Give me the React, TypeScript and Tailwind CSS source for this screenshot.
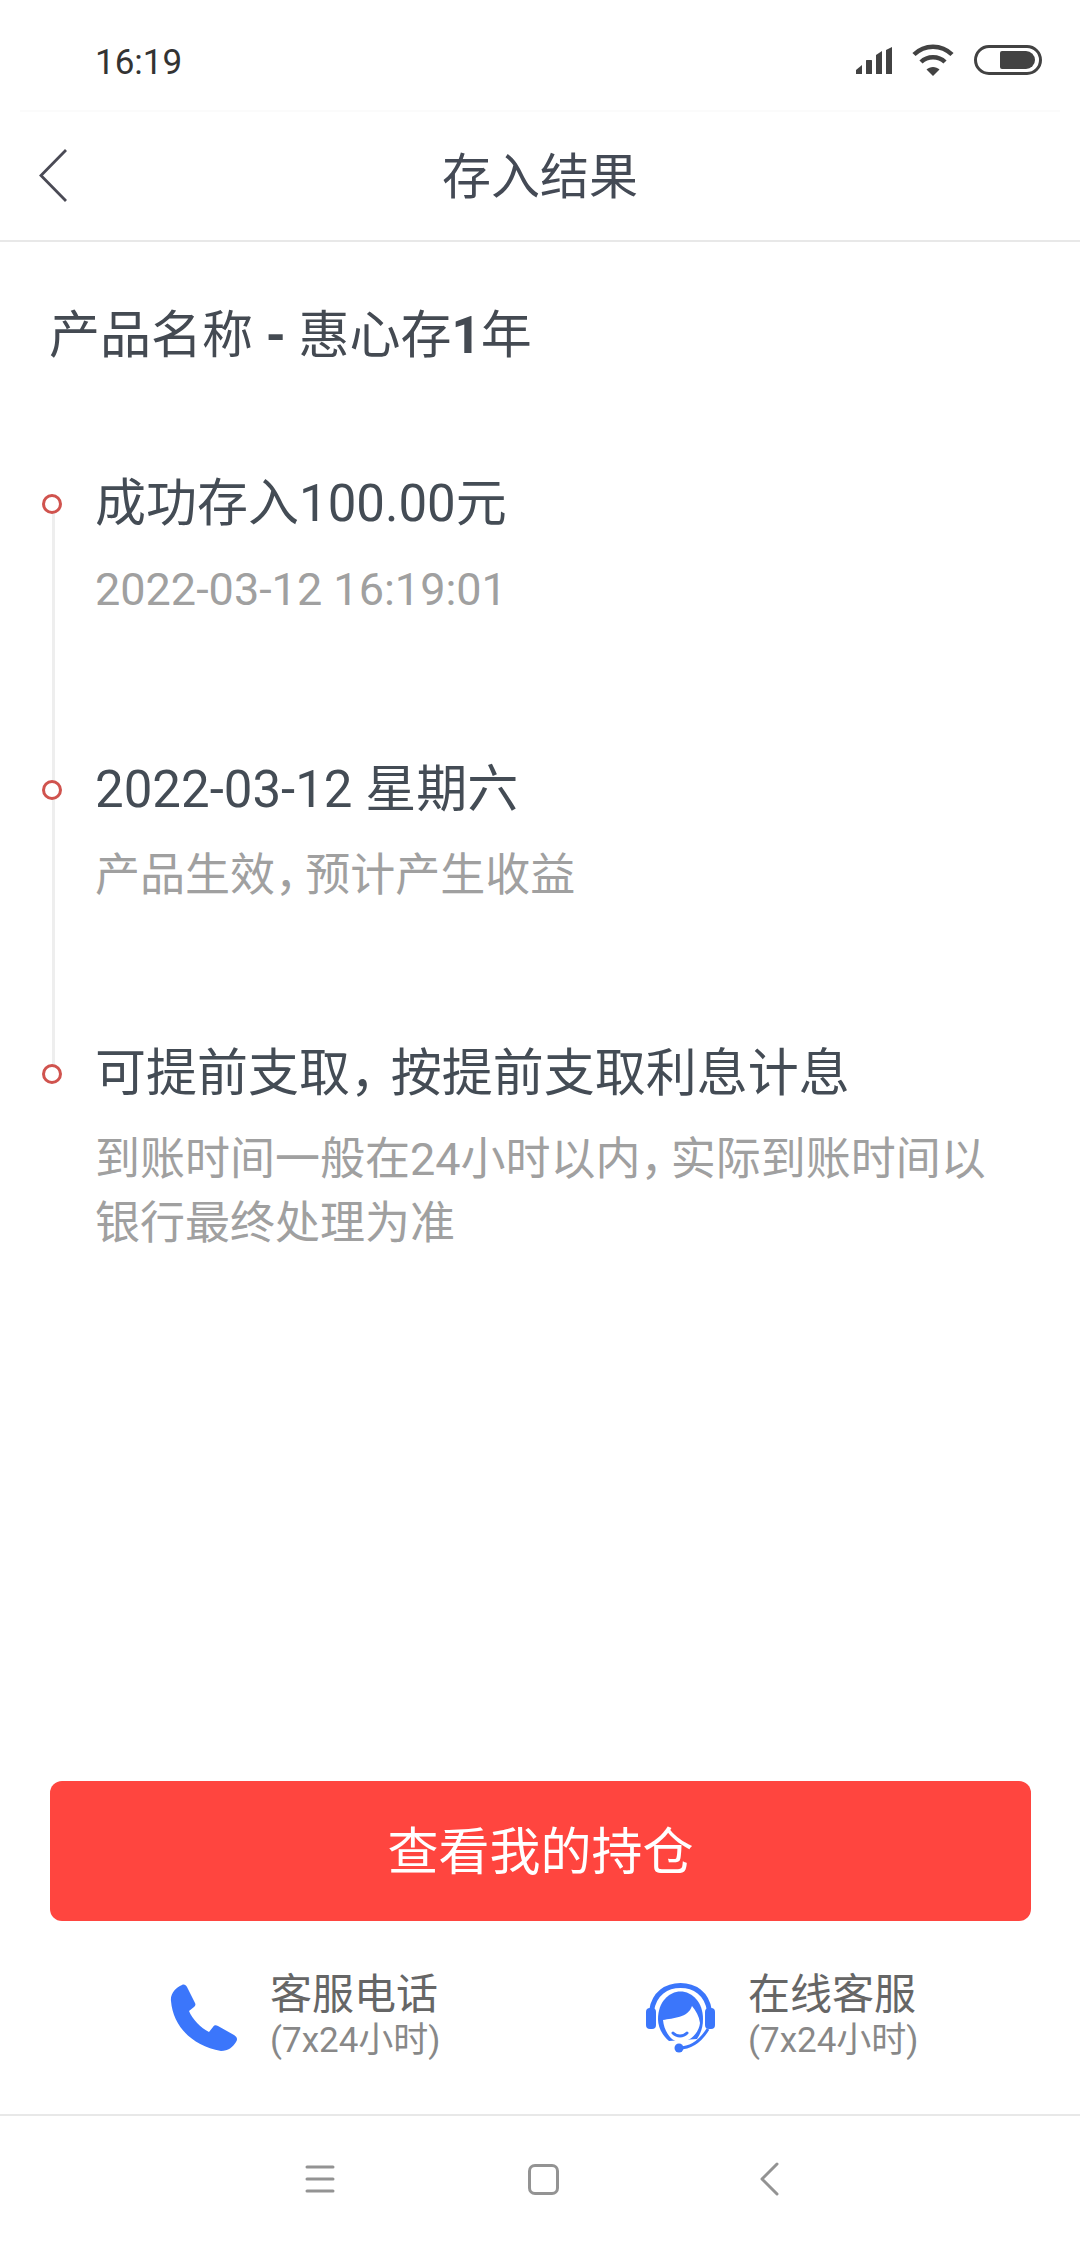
import React from "react";

const Comma = ({ tight }: { tight?: boolean }) => (
  <span className={tight ? "tracking-[-0.33em]" : "tracking-[-0.2em]"}>，</span>
);

const steps = [
  { title: <>成功存入100.00元</>, desc: [<>2022-03-12 16:19:01</>], offset: "" },
  { title: <>2022-03-12 星期六</>, desc: [<>产品生效<Comma tight />预计产生收益</>], offset: "" },
  {
    title: <>可提前支取<Comma />按提前支取利息计息</>,
    desc: [<>到账时间一般在24小时以内<Comma tight />实际到账时间以</>, <>银行最终处理为准</>],
    offset: "-mt-[2px]",
  },
];

const StatusIcons = () => (
  <div className="flex items-center gap-[20px]">
    <svg width="36" height="27" viewBox="0 0 36 27" fill="#424242">
      <path d="M0 27V23L6 18V27Z" />
      <rect x="10" y="13" width="6" height="14" rx="0.5" />
      <path d="M20 27V8L26 4V27Z" />
      <path d="M30 27V3L36 0V27Z" />
    </svg>
    <svg width="42" height="32" viewBox="0 0 42 32" fill="none" stroke="#424242" strokeWidth="4.5">
      <path d="M2 10.5C12.5 0 29.5 0 40 10.5" />
      <path d="M9 18C15.5 11.5 26.5 11.5 33 18" />
      <path d="M21 32L14.5 25.5C18 22 24 22 27.5 25.5Z" fill="#424242" stroke="none" />
    </svg>
    <div className="flex h-[30px] w-[68px] items-center justify-end rounded-full border-[3px] border-[#424242] pr-[4px]">
      <div className="h-[18px] w-[35px] rounded-l-[2px] rounded-r-[9px] bg-[#424242]" />
    </div>
  </div>
);

const PhoneIcon = () => (
  <svg width="68" height="68" viewBox="0 0 68 68" fill="#3b76fb">
    <path d="M12 1C14 0 16 1 17 3L25 19C26 21 25 22 24 23L19 27C22 35 31 44 39 48L43 43C44 41 46 41 48 42L64 51C67 53 68 55 66 58C63 63 58 67 51 67C22 62 3 42 1 17C0 10 6 3 12 1Z" />
  </svg>
);

const AgentIcon = () => (
  <svg width="70" height="70" viewBox="0 0 70 70" fill="#3b76fb">
    {/* headband and ear cups */}
    <path d="M5.5 28C8 10 21 2.5 34.5 2.5C48 2.500 61 10 63.500 28" fill="none" stroke="#3b76fb" strokeWidth="5" />
    <rect x="0" y="25" width="10" height="21" rx="4" />
    <rect x="59" y="25" width="10" height="21" rx="4" />
    {/* hair */}
    <path d="M12 36C12 19 23 8.500 34.500 8.500C46 8.500 57 19 57 36C57 44 55 50 51 56L23 58C16 52 12 44 12 36Z" />
    {/* face */}
    <path d="M17 37C27 35 42 35 46 23C50 28 53 33 54 40C53 50 44 59 34 59C25 59 18 48 17 37Z" fill="#fff" />
    {/* smile */}
    <path d="M27 50C31 54 37 54 41 50" fill="none" stroke="#3b76fb" strokeWidth="3" strokeLinecap="round" />
    {/* microphone */}
    <path d="M33 65C44 65 54 59 62 46" fill="none" stroke="#3b76fb" strokeWidth="3" />
    <circle cx="33" cy="65" r="4.500" />
  </svg>
);

export default function App() {
  return (
    <div className="flex h-[2244px] w-[1080px] flex-col bg-white font-['Roboto','Noto_Sans_CJK_SC',sans-serif]">
      {/* system status bar */}
      <div className="mx-[20px] flex h-[112px] items-center justify-between border-b-2 border-[#fbfbfb] pl-[75px] pr-[18px] pt-[14px]">
        <span className="text-[35px] leading-none text-[#333333]">16:19</span>
        <div className="pb-[4px]">
          <StatusIcons />
        </div>
      </div>

      {/* title bar */}
      <header className="relative flex h-[130px] items-center justify-center border-b-2 border-[#e8e8e8]">
        <svg className="absolute left-[38px] top-[36px]" width="32" height="56" viewBox="0 0 32 56" fill="none" stroke="#4a4a55" strokeWidth="2.800">
          <path d="M28 2L3 27.500L28 53" />
        </svg>
        <h1 className="pt-[3px] text-[49px] font-normal text-[#444a55]">存入结果</h1>
      </header>

      <main className="flex flex-1 flex-col px-[50px] pt-[62px]">
        <h2 className="-ml-px text-[51px] leading-[64px] text-[#444a52]">
          产品名称 <span className="font-bold">-</span> 惠心存<span className="font-bold">1</span>年
        </h2>

        {/* timeline */}
        <ol className="relative mt-[104px] flex flex-col gap-[136px]">
          <div className="absolute left-[2px] top-[40px] h-[562px] w-[3px] bg-[#eeeeee]" />
          {steps.map((step, i) => (
            <li key={i} className={`relative pl-[45px] ${step.offset}`}>
              <span className="absolute left-[-8px] top-[22px] size-[20px] rounded-full border-[3px] border-[#d0534e] bg-white" />
              <p className="text-[51px] leading-[64px] text-[#444c55]">{step.title}</p>
              <div className="mt-[22px] text-[45px] leading-[64px] text-[#a0a0a0]">
                {step.desc.map((line, j) => (
                  <p key={j}>{line}</p>
                ))}
              </div>
            </li>
          ))}
        </ol>

        <button className="mt-auto flex h-[140px] w-[981px] shrink-0 items-center justify-center rounded-[12px] bg-[#ff453f] pt-[5px] text-[51px] text-white">
          查看我的持仓
        </button>

        {/* customer service entries */}
        <div className="-mx-[50px] flex h-[193px] shrink-0 items-center pl-[170px]">
          <div className="flex w-[476px] items-center gap-[32px]">
            <PhoneIcon />
            <div className="-mt-[2px]">
              <p className="text-[42px] leading-[48px] text-[#666666]">客服电话</p>
              <p className="text-[35px] leading-[44px] text-[#888888]">(7x24小时)</p>
            </div>
          </div>
          <div className="flex items-center gap-[32px]">
            <AgentIcon />
            <div className="-mt-[2px]">
              <p className="text-[42px] leading-[48px] text-[#666666]">在线客服</p>
              <p className="text-[35px] leading-[44px] text-[#888888]">(7x24小时)</p>
            </div>
          </div>
        </div>
      </main>

      {/* system navigation bar */}
      <nav className="flex h-[130px] shrink-0 items-center border-t-2 border-[#e8e8e8] pb-[2px] pl-[305px]">
        <svg width="30" height="28" viewBox="0 0 30 28" stroke="#939393" strokeWidth="3" strokeLinecap="round">
          <path d="M2 2H28M2 14H28M2 26H28" />
        </svg>
        <div className="ml-[193px] size-[31px] rounded-[7px] border-[3px] border-[#939393]" />
        <svg className="ml-[200px]" width="20" height="34" viewBox="0 0 20 34" fill="none" stroke="#939393" strokeWidth="3" strokeLinecap="round" strokeLinejoin="round">
          <path d="M18 2L3 17L18 32" />
        </svg>
      </nav>
    </div>
  );
}
